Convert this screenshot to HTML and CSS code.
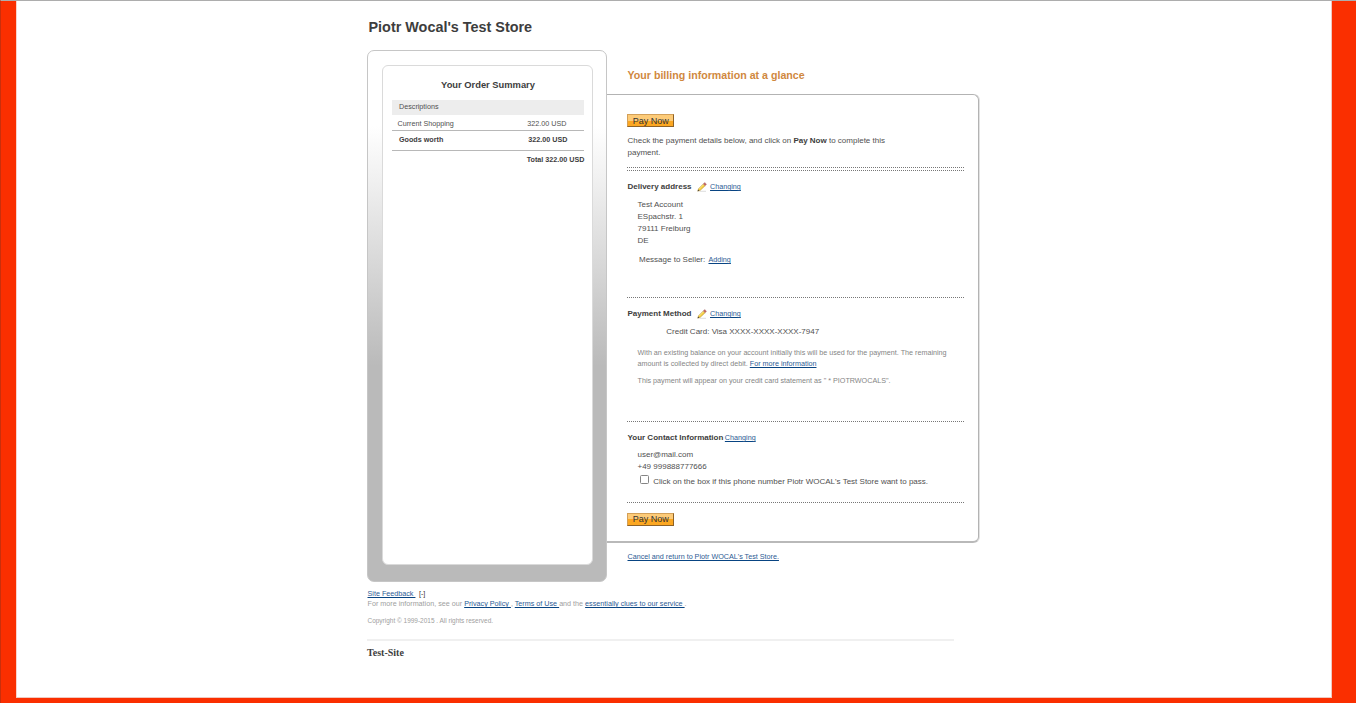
FILE: index.html
```html
<!DOCTYPE html>
<html lang="en">
<head>
<meta charset="utf-8">
<title>Piotr Wocal's Test Store</title>
<link rel="stylesheet" href="styles.css">
</head>
<body>
<svg class="defs" aria-hidden="true">
  <symbol id="pencil" viewBox="0 0 10 10">
    <path d="M2.500 9.300h6.500" stroke="#d4d4d4" stroke-width=".8"/>
    <path d="M.8 9.200 1.500 6.800 6.300 1.900 8.200 3.700 3.300 8.300Z" fill="#f4cc3a" stroke="#b08c3c" stroke-width=".5"/>
    <path d="M2.300 7 6.800 2.500" stroke="#fff0a0" stroke-width=".7"/>
    <path d="M6.300 1.900 7.700.4 9.500 2.200 8.200 3.700Z" fill="#c4605c" stroke="#a98080" stroke-width=".4"/>
    <path d="M.6 9.300 1.100 7.600 2.400 8.800Z" fill="#4c463a"/>
  </symbol>
</svg>
<div class="frame">
  <div class="page">
    <h1 class="store">Piotr Wocal's Test Store</h1>
    <div class="columns">
      <aside class="summary">
        <div class="summary-inner">
          <h2 class="summary-title">Your Order Summary</h2>
          <div class="row head"><span>Descriptions</span></div>
          <div class="row item"><span>Current Shopping</span><span>322.00 USD</span></div>
          <div class="row subtotal"><span>Goods worth</span><span>322.00 USD</span></div>
          <div class="row total">Total 322.00 USD</div>
        </div>
      </aside>
      <main class="main">
        <h2 class="billing-title">Your billing information at a glance</h2>
        <div class="card">
          <button class="pay first">Pay Now</button>
          <p class="intro">Check the payment details below, and click on <b>Pay Now</b> to complete this payment.</p>
          <div class="divider"></div>
          <section class="section delivery">
            <h3 class="heading">Delivery address<svg class="pencil"><use href="#pencil"/></svg><a class="link" href="#">Changing</a></h3>
            <p class="address">Test Account<br>ESpachstr. 1<br>79111 Freiburg<br>DE</p>
            <p class="message">Message to Seller: <a class="link" href="#">Adding</a></p>
          </section>
          <section class="section payment">
            <h3 class="heading">Payment Method<svg class="pencil"><use href="#pencil"/></svg><a class="link" href="#">Changing</a></h3>
            <p class="credit">Credit Card: Visa XXXX-XXXX-XXXX-7947</p>
            <p class="note">With an existing balance on your account initially this will be used for the payment. The remaining<br>amount is collected by direct debit. <a class="link" href="#">For more information</a></p>
            <p class="note">This payment will appear on your credit card statement as " * PIOTRWOCALS".</p>
          </section>
          <section class="section contact">
            <h3 class="heading">Your Contact Information<a class="link near" href="#">Changing</a></h3>
            <p class="details">user@mail.com<br>+49 999888777666</p>
            <label class="check"><input class="box" type="checkbox"><span>Click on the box if this phone number Piotr WOCAL's Test Store want to pass.</span></label>
          </section>
          <div class="section final"><button class="pay">Pay Now</button></div>
        </div>
        <a class="link cancel" href="#">Cancel and return to Piotr WOCAL's Test Store.</a>
      </main>
    </div>
    <footer class="footer">
      <p class="line"><a class="link" href="#">Site Feedback&nbsp;</a><span class="toggle">[-]</span></p>
      <p class="line">For more information, see our <a class="link" href="#">Privacy Policy&nbsp;</a>, <a class="link" href="#">Terms of Use&nbsp;</a>and the <a class="link" href="#">essentially clues to our service&nbsp;</a>.</p>
      <p class="copyright">Copyright © 1999-2015 . All rights reserved.</p>
      <p class="site">Test-Site</p>
    </footer>
  </div>
</div>
</body>
</html>
```
FILE: styles.css
```css
* { box-sizing: border-box; }
body { margin: 0; border-top: 1px solid #adadad; border-left: 1px solid #c92f0c; font: 8px/12px "Liberation Sans", Arial, sans-serif; color: #505050; background: #fff; }
h1, h2, h3, p { margin: 0; }
b, h1, h2, h3 { color: #3d3d3d; }
.defs { display: none; }
.frame { height: 702px; overflow: hidden; border: solid #fa2f00; border-width: 0 24px 5px 15px; box-shadow: inset -1px -1px #f0c9c0, inset 1px 0 #f8d4cc; }
.page { width: 613px; margin-left: 351px; padding-top: 16px; }
.store { font-size: 14.4px; line-height: 20px; padding-left: 1.5px; }
.columns { display: flex; margin-top: 13px; height: 532px; }

.summary { width: 240px; height: 532px; padding: 14px 13px 16px 14px; border: 1px solid #c6c6c6; border-radius: 7px; background: linear-gradient(#fff 75px, #f0f0f0 130px, #bababa 315px); }
.summary-inner { height: 500px; padding: 12px 8px 0 9px; border: 1px solid #dadada; border-radius: 6px; background: #fff; }
.summary-title { font-size: 9.36px; line-height: 14px; text-align: center; }
.row { display: flex; justify-content: space-between; font-size: 7.2px; line-height: 12px; }
.head { margin-top: 8px; height: 15px; padding: 1px 7px; background: #ededed; }
.item { height: 16px; padding: 3px 17.5px 0 5.5px; border-bottom: 1px solid #b8b8b8; }
.subtotal { height: 20px; padding: 3px 16.5px 0 7px; border-bottom: 1px solid #b8b8b8; font-weight: bold; color: #3d3d3d; }
.total { margin: 3px -0.5px 0 0; justify-content: flex-end; font-weight: bold; color: #3d3d3d; }

.main { width: 373px; padding-top: 18px; }
.billing-title { padding-left: 20.5px; font-size: 10.65px; line-height: 14px; color: #d0883e; }
.card { width: 372px; height: 449px; margin-top: 12px; padding: 19px 14px 0 20px; border: 1px solid #b3b3b3; border-left: 0; border-bottom: 2px solid #b9b9b9; border-radius: 0 6px 6px 0; box-shadow: 1px 0 #e2e2e2; }
.pay { display: block; width: 47px; height: 13px; padding: 0 0 0 .5px; border: 1px solid; border-color: #d3a059 #8e6227 #8e6227 #d3a059; background: linear-gradient(#fdcb78 50%, #fca721 50%); font: 9px/11px "Liberation Sans", Arial, sans-serif; color: #333; }
.first { padding-top: 1px; }
.intro { width: 280px; margin-top: 8px; padding-left: .5px; }
.divider { height: 4px; margin-top: 8px; border-top: 1px dotted #777; }
.section { border-top: 1px dotted #777; margin-top: -1px; }
.heading { display: flex; align-items: center; padding-left: .5px; font-size: 8px; line-height: 12px; }
.pencil { width: 10px; height: 10px; margin: 0 3.5px 1px 5px; }
.link { font-size: 7.2px; font-weight: normal; color: #2c5b94; text-decoration: underline #084482; text-underline-offset: 1px; }
.near { margin-left: 1.5px; }
.delivery { height: 128px; padding-top: 10px; }
.address { margin: 6px 0 0 10.5px; }
.message { margin: 7px 0 0 12px; }
.message .link { margin-left: 1px; }
.payment { height: 125px; padding-top: 10px; }
.credit { margin: 6px 0 0 39.3px; }
.note { margin: 9px 0 0 10.5px; font-size: 7.2px; line-height: 11px; color: #858585; }
.note + .note { margin-top: 6px; }
.contact { height: 82px; padding-top: 10px; }
.details { margin: 5px 0 0 10.5px; }
.check { display: flex; margin: 2px 0 0 13px; }
.box { appearance: none; width: 9px; height: 9px; margin: 0 4.2px 0 0; border: 1px solid #858585; border-radius: 1.5px; background: #fff; }
.check span { padding-top: 1px; }
.final { padding-top: 10px; }
.cancel { display: block; margin: 8px 0 0 20.5px; line-height: 12px; }

.footer { padding: 7px 0 0 .5px; font-size: 7.2px; color: #a0a0a0; }
.line { line-height: 10px; white-space: nowrap; }
.toggle { margin-left: 3.5px; color: #333; }
.copyright { margin-top: 6px; font-size: 6.48px; line-height: 12px; }
.site { width: 587px; margin: 12px 0 0 -.5px; padding-top: 6px; border-top: 2px solid #f0f0f0; font: bold 10px/12px "Liberation Serif", serif; color: #3d3d3d; }
```
